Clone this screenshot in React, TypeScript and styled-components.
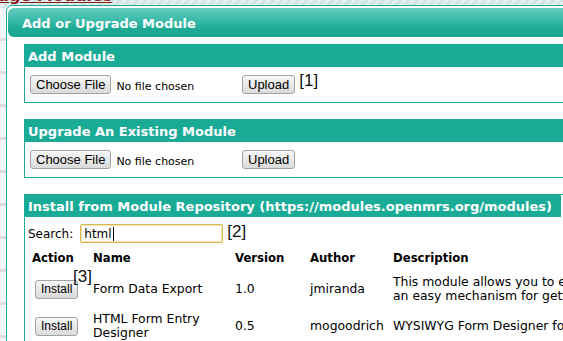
import React from 'react'
import styled, { createGlobalStyle } from 'styled-components'

const teal = '#1aab97'

const GlobalStyle = createGlobalStyle`
  html, body {
    margin: 0;
    padding: 0;
    width: 563px;
    height: 341px;
    overflow: hidden;
    background: #ffffff;
  }
  * {
    box-sizing: border-box;
  }
`

const Page = styled.div`
  position: relative;
  width: 563px;
  height: 341px;
  overflow: hidden;
  background: #f6f6f6;
  font-family: 'DejaVu Sans', Verdana, sans-serif;
`

const TopBand = styled.div`
  height: 8px;
  overflow: hidden;
  background: repeating-linear-gradient(
    135deg,
    #cfe5e1 0px,
    #cfe5e1 3px,
    #e2efec 3px,
    #e2efec 6px
  );
`

const PageHeading = styled.h2`
  margin: -14px 0 0 -40px;
  font-size: 16px;
  font-weight: bold;
  color: #8b1d1d;
  text-decoration: underline;
  white-space: nowrap;
`

const SideRail = styled.div`
  width: 6px;
  height: 333px;
  background: repeating-linear-gradient(
    180deg,
    #f7f7f7 0px,
    #f7f7f7 30px,
    #dcdcdc 30px,
    #dcdcdc 33px
  );
`

const Dialog = styled.div`
  position: absolute;
  top: 5px;
  left: 6px;
  width: 640px;
  height: 420px;
  padding: 2px 1px;
  background: #ffffff;
  border: 1px solid ${teal};
  border-radius: 6px;
`

const TitleBar = styled.div`
  display: flex;
  align-items: center;
  height: 29px;
  padding: 1px 0 0 14px;
  border-radius: 6px;
  background: linear-gradient(#62cdbd 0%, #3dbba9 40%, #1ba994 75%, #1aa893 100%);
  color: #ffffff;
  font-size: 13px;
  font-weight: bold;
`

const DialogBody = styled.div`
  display: flex;
  flex-direction: column;
  gap: 16px;
  padding: 7px 0 0 16px;
`

const Section = styled.div`
  width: 560px;
  border: 1px solid ${teal};
  background: #ffffff;
`

const SectionHeader = styled.div<{ $fill?: number }>`
  display: flex;
  align-items: center;
  height: 22px;
  width: ${({ $fill }) => ($fill ? `${$fill}px` : 'auto')};
  padding: 1px 0 0 3px;
  background: ${teal};
  color: #ffffff;
  font-size: 13px;
  font-weight: bold;
  white-space: nowrap;
`

const UploadRow = styled.div`
  display: flex;
  align-items: center;
  height: 35px;
  padding-left: 5px;
`

const FileField = styled.div`
  display: flex;
  align-items: center;
  width: 212px;
`

const FileStatus = styled.span`
  margin: 3px 0 0 5px;
  font-size: 11px;
  color: #000000;
`

const NativeButton = styled.button<{ $small?: boolean }>`
  height: 19px;
  padding: 0 5px;
  border: 1px solid #a3a3a3;
  border-radius: 3px;
  background: linear-gradient(#f7f7f7, #e9e9e9 50%, #dadada);
  color: #000000;
  font-family: 'Liberation Sans', Arial, sans-serif;
  font-size: ${({ $small }) => ($small ? '12px' : '13px')};
  line-height: 17px;
  cursor: pointer;
`

const Note = styled.span`
  align-self: flex-start;
  margin: 5px 0 0 4px;
  font-family: 'Liberation Sans', Arial, sans-serif;
  font-size: 17px;
  line-height: 17px;
  color: #111111;
`

const RepoBody = styled.div`
  padding: 7px 0 0 3px;
`

const SearchRow = styled.div`
  display: flex;
  align-items: center;
  height: 19px;
  font-size: 12px;
`

const SearchInput = styled.div`
  display: flex;
  align-items: center;
  width: 143px;
  height: 19px;
  margin: 0 4px 0 7px;
  padding-left: 3px;
  border: 1px solid #dcb650;
  border-radius: 2px;
  box-shadow: inset 0 0 0 1px #f6e6b4;
  font-size: 12px;
`

const Caret = styled.span`
  width: 1px;
  height: 14px;
  margin-left: 1px;
  background: #000000;
`

const ModuleTable = styled.div`
  display: grid;
  grid-template-columns: 65px 142px 75px 83px 1fr;
  margin-top: 5px;
  font-size: 12.4px;
  color: #000000;
`

const HeadCell = styled.div<{ $pad?: number }>`
  display: flex;
  align-items: center;
  height: 19px;
  padding-left: ${({ $pad }) => $pad ?? 0}px;
  margin-bottom: 3px;
  font-size: 11.7px;
  font-weight: bold;
  white-space: nowrap;
`

const Cell = styled.div<{ $pad?: number }>`
  position: relative;
  display: flex;
  flex-direction: column;
  justify-content: center;
  min-height: 37px;
  padding: 5px 0 4px ${({ $pad }) => $pad ?? 0}px;
  line-height: 14px;
  white-space: nowrap;
`

const CellButton = styled.div`
  display: flex;
  align-items: center;
`

const OverNote = styled(Note)`
  position: absolute;
  top: -2px;
  left: 45px;
  margin: 0;
`

const modules = [
  {
    name: ['Form Data Export'],
    version: '1.0',
    author: 'jmiranda',
    description: [
      'This module allows you to export form data, providing',
      'an easy mechanism for getting data out of OpenMRS',
    ],
    note: '[3]',
  },
  {
    name: ['HTML Form Entry', 'Designer'],
    version: '0.5',
    author: 'mogoodrich',
    description: ['WYSIWYG Form Designer for HTML Form Entry'],
  },
]

function UploadSection({ title, note }: { title: string; note?: string }) {
  return (
    <Section>
      <SectionHeader>{title}</SectionHeader>
      <UploadRow>
        <FileField>
          <NativeButton>Choose File</NativeButton>
          <FileStatus>No file chosen</FileStatus>
        </FileField>
        <NativeButton>Upload</NativeButton>
        {note && <Note>{note}</Note>}
      </UploadRow>
    </Section>
  )
}

export default function App() {
  return (
    <>
      <GlobalStyle />
      <Page>
        <TopBand>
          <PageHeading>Manage Modules</PageHeading>
        </TopBand>
        <SideRail />
        <Dialog>
          <TitleBar>Add or Upgrade Module</TitleBar>
          <DialogBody>
            <UploadSection title="Add Module" note="[1]" />
            <UploadSection title="Upgrade An Existing Module" />
            <Section>
              <SectionHeader $fill={536}>
                Install from Module Repository (https://modules.openmrs.org/modules)
              </SectionHeader>
              <RepoBody>
                <SearchRow>
                  <span>Search:</span>
                  <SearchInput>
                    html
                    <Caret />
                  </SearchInput>
                  <Note style={{ margin: '-1px 0 0 0' }}>[2]</Note>
                </SearchRow>
                <ModuleTable>
                  <HeadCell $pad={4}>Action</HeadCell>
                  <HeadCell>Name</HeadCell>
                  <HeadCell>Version</HeadCell>
                  <HeadCell>Author</HeadCell>
                  <HeadCell>Description</HeadCell>
                  {modules.map((m) => (
                    <React.Fragment key={m.author}>
                      <Cell $pad={7}>
                        <CellButton>
                          <NativeButton $small>Install</NativeButton>
                        </CellButton>
                        {m.note && <OverNote>{m.note}</OverNote>}
                      </Cell>
                      <Cell>
                        {m.name.map((line) => (
                          <span key={line}>{line}</span>
                        ))}
                      </Cell>
                      <Cell>{m.version}</Cell>
                      <Cell>{m.author}</Cell>
                      <Cell>
                        {m.description.map((line) => (
                          <span key={line}>{line}</span>
                        ))}
                      </Cell>
                    </React.Fragment>
                  ))}
                </ModuleTable>
              </RepoBody>
            </Section>
          </DialogBody>
        </Dialog>
      </Page>
    </>
  )
}
